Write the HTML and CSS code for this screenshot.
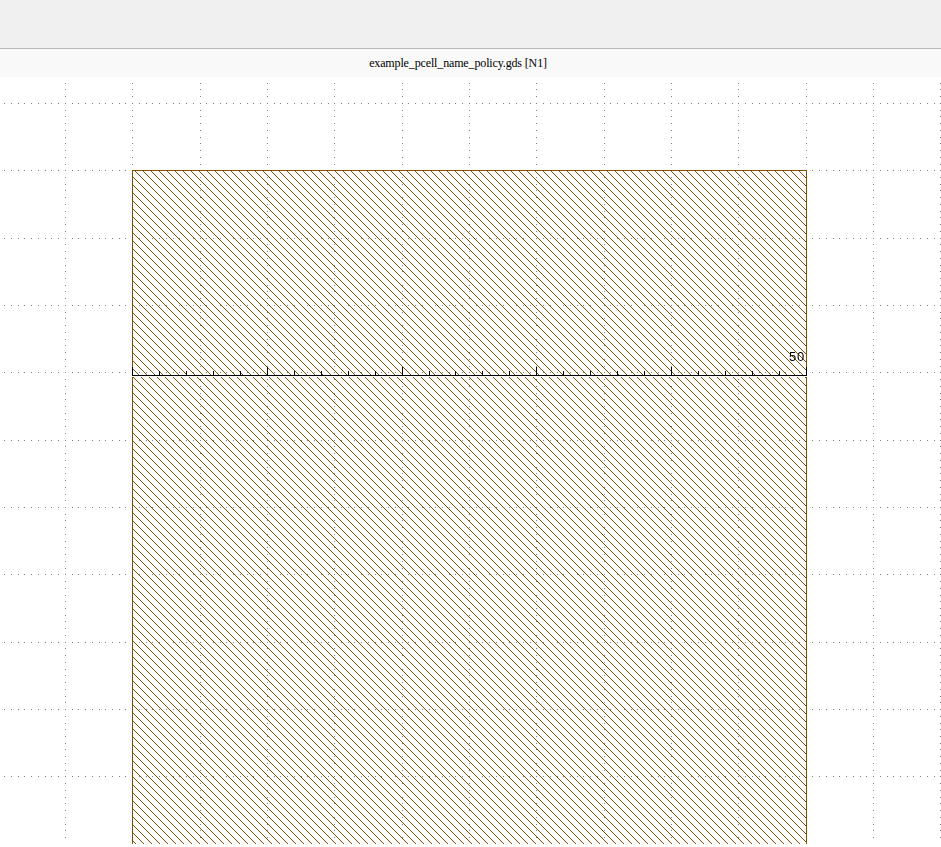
FILE: index.html
```html
<!DOCTYPE html>
<html lang="en">
<head>
<meta charset="utf-8">
<title>Layout view</title>
<link rel="stylesheet" href="styles.css">
</head>
<body>
<header class="toolbar"></header>
<div class="tab-title"><span>example_pcell_name_policy.gds [N1]</span></div>
<main class="view">
<canvas id="layout" width="941" height="770"></canvas>
<span class="ruler-label">50</span>
</main>
<script src="layout.js"></script>
</body>
</html>
```
FILE: styles.css
```css
body {
  margin: 0;
  width: 941px;
  height: 847px;
  display: flex;
  flex-direction: column;
  overflow: hidden;
  background: #fff;
}

.toolbar {
  box-sizing: border-box;
  height: 49px;
  background: #f0f0f0;
  border-bottom: 1px solid #b8b8b8;
}

.tab-title {
  height: 28px;
  background: #f9f9f9;
  color: #000;
  font: 12px/28px "Liberation Serif", serif;
  letter-spacing: -0.14px;
  text-align: center;
  padding-right: 25px;
  white-space: pre;
}

.view {
  position: relative;
  height: 770px;
}

.view canvas {
  display: block;
}

.ruler-label {
  position: absolute;
  left: 789px;
  top: 272px;
  font: 13px/16px "Liberation Sans", sans-serif;
  letter-spacing: 0.8px;
  color: #000;
}
```
FILE: layout.js
```javascript
const ctx = document.getElementById("layout").getContext("2d");
const TOP = 77;
const END = 844;
const dot = (x, y, w = 1, h = 1) => ctx.fillRect(x, y - TOP, w, h);

// Grid: ten dots per cell
const STEP = 6.735;
const CELL = 67.35;
const X0 = 132.2;
const Y0 = 102.9;
ctx.fillStyle = "#808080";
for (let r = 0; r <= 10; r++) {
  const y = Math.round(Y0 + r * CELL);
  for (let i = -19; i <= 120; i++) dot(Math.round(X0 + i * STEP), y);
}
for (let c = -1; c <= 12; c++) {
  const x = Math.round(X0 + c * CELL);
  for (let i = -3; i < 110; i++) {
    const y = Math.round(Y0 + i * STEP);
    if (y < 840) dot(x, y);
  }
}

// Hatched box
ctx.fillStyle = "#805000";
for (let y = 171; y < END; y++) {
  for (let x = 133; x < 806; x++) {
    if ((x - y + 8000) % 8 === 4) dot(x, y);
  }
}
dot(132, 170, 675, 1);
dot(132, 170, 1, END - 170);
dot(806, 170, 1, END - 170);

// Ruler
ctx.fillStyle = "#ffffff";
dot(132, 376, 675, 1);
ctx.fillStyle = "#000000";
dot(132, 375, 675, 1);
for (let i = 0; i <= 25; i++) {
  const h = i % 5 === 0 ? 8 : 4;
  dot(Math.round(X0 + i * 26.94), 375 - h, 1, h);
}
```
